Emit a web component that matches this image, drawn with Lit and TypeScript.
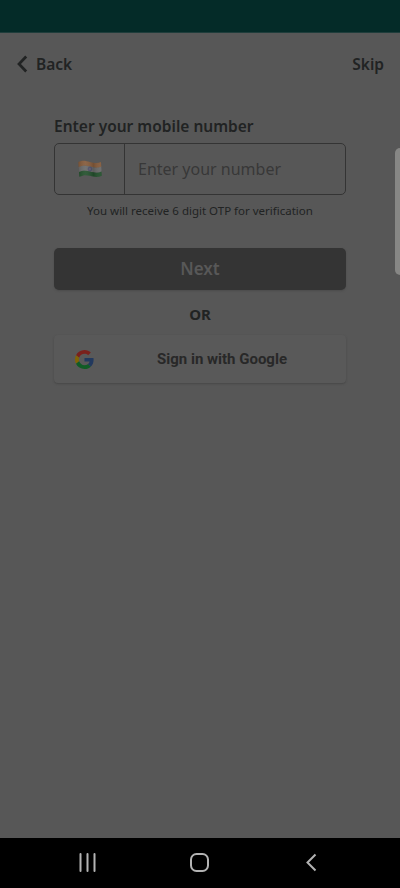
import { LitElement, html, css } from "lit";
import { customElement } from "lit/decorators.js";

@customElement("app-root")
export class AppRoot extends LitElement {
  static styles = css`
    :host {
      display: flex;
      flex-direction: column;
      position: relative;
      height: 888px;
      width: 100%;
      overflow: hidden;
      background: #575757;
      color: #212323;
      font-family: "Noto Sans", "Open Sans", sans-serif;
    }
    * { box-sizing: border-box; }
    svg { display: block; flex: none; }
    .status { height: 33px; flex: none; background: #042b28; border-bottom: 1px solid #1f3d3b; }
    .top {
      display: flex;
      align-items: center;
      justify-content: space-between;
      height: 62px;
      padding: 0 16px 0 17px;
      font-size: 15.5px;
      font-weight: 600;
    }
    .back { display: flex; align-items: center; gap: 8px; }
    .form { display: flex; flex-direction: column; margin: 20px 54px 0; flex: 1; }
    .label { font-size: 15.5px; font-weight: 600; line-height: 22px; height: 28px; white-space: nowrap; }
    .field { display: flex; height: 52px; border: 1px solid #343434; border-radius: 5px; }
    .country {
      width: 70px;
      border-right: 1px solid #343434;
      display: flex;
      align-items: center;
      justify-content: center;
    }
    .number { padding-left: 13px; line-height: 50px; font-size: 16px; color: #383838; white-space: nowrap; }
    .hint { margin-top: 7px; line-height: 17px; font-size: 11.5px; text-align: center; white-space: nowrap; }
    .next {
      margin-top: 29px;
      height: 42px;
      line-height: 42px;
      border-radius: 5px;
      background: #343434;
      color: #585858;
      box-shadow: 0 1px 2px #4b4b4b;
      text-align: center;
      font-size: 17px;
      font-weight: 600;
    }
    .or { height: 45px; line-height: 48px; text-align: center; font-size: 15px; font-weight: 700; }
    .google {
      display: flex;
      align-items: center;
      height: 48px;
      padding-left: 21px;
      border-radius: 4px;
      background: #595959;
      box-shadow: 0 1px 2px #474747;
      font: 700 15px Roboto, sans-serif;
      color: #282828;
    }
    .google span { margin-left: 63px; white-space: nowrap; }
    .nav { height: 50px; flex: none; background: #000; display: flex; justify-content: center; align-items: center; }
    .edge {
      position: absolute;
      right: -5px;
      top: 148px;
      width: 10px;
      height: 127px;
      border-radius: 5px;
      background: #878785;
    }
  `;

  render() {
    return html`
      <div class="status"></div>
      <header class="top">
        <div class="back">
          <svg width="11" height="18" viewBox="0 0 11 18" fill="none" stroke="#212323" stroke-width="2.7">
            <path d="M9.2 1.5 2 9l7.2 7.5" />
          </svg>
          <span class="back-text">Back</span>
        </div>
        <span class="skip">Skip</span>
      </header>
      <main class="form">
        <div class="label">Enter your mobile number</div>
        <div class="field">
          <div class="country">
            <svg width="24" height="18" viewBox="0 0 24 18">
              <defs>
                <linearGradient id="wave" x1="0" x2="1" y1="0" y2="0">
                  <stop offset="0" stop-color="#000" stop-opacity=".12" />
                  <stop offset=".3" stop-color="#fff" stop-opacity=".07" />
                  <stop offset=".65" stop-color="#000" stop-opacity=".13" />
                  <stop offset="1" stop-color="#fff" stop-opacity=".04" />
                </linearGradient>
              </defs>
              <path fill="#855b3b" d="M.3 2C5-.3 8 1 12 2s7 1.8 11 0l.3 5C19 8.8 16 7.5 12 6.5S5 5.5.7 7.5z" />
              <path fill="#696969" d="M.7 7C5 5 8 5.5 12 6.5s7 2 11.3 0l.2 5c-4.500 2-7.500 1-11.500 0S5 10.500 1 12.500z" />
              <path fill="#24512d" d="M1 12c4-2 7-1.500 11-.5s7.500 2 11.500 0l.3 4.300c-4.500 2-7.800 1-11.800 0s-6.500-1-10.700 1z" />
              <circle cx="12" cy="9" r="1.900" fill="#5d5d6d" stroke="#44446a" stroke-width=".7" />
              <path fill="url(#wave)" d="M.3 2C5-.3 8 1 12 2s7 1.800 11 0l.8 13.800c-4.500 2-7.800 1-11.800 0s-6.500-1-10.700 1z" />
            </svg>
          </div>
          <div class="number">Enter your number</div>
        </div>
        <div class="hint">You will receive 6 digit OTP for verification</div>
        <div class="next">Next</div>
        <div class="or">OR</div>
        <div class="google">
          <svg width="19" height="19" viewBox="0 0 48 48">
            <path fill="#7a211c" d="M24 9.500c3.540 0 6.710 1.220 9.210 3.600l6.850-6.850C35.900 2.380 30.470 0 24 0 14.620 0 6.510 5.380 2.560 13.220l7.980 6.190C12.430 13.720 17.740 9.500 24 9.500z" />
            <path fill="#22395e" d="M46.980 24.550c0-1.570-.15-3.090-.38-4.550H24v9.020h12.940c-.58 2.960-2.260 5.480-4.780 7.180l7.730 6c4.510-4.180 7.090-10.360 7.090-17.650z" />
            <path fill="#826405" d="M10.530 28.590c-.48-1.450-.76-2.990-.76-4.590s.27-3.140.76-4.590l-7.980-6.190C.92 16.460 0 20.120 0 24c0 3.880.92 7.540 2.560 10.780z" />
            <path fill="#105c25" d="M24 48c6.480 0 11.930-2.130 15.890-5.810l-7.730-6c-2.150 1.450-4.920 2.300-8.160 2.300-6.260 0-11.570-4.220-13.470-9.910l-7.980 6.190C6.510 42.620 14.620 48 24 48z" />
          </svg>
          <span>Sign in with Google</span>
        </div>
      </main>
      <nav class="nav">
        <svg width="400" height="50" fill="none" stroke="#b3b3b3" stroke-width="2">
          <path d="M80.500 16v17M87.500 16v17M94.500 16v17" stroke-linecap="round" />
          <rect x="191" y="16" width="17" height="17" rx="5.500" />
          <path d="M315.500 16.500 307.500 24.500l8 8" />
        </svg>
      </nav>
      <div class="edge"></div>
    `;
  }
}
